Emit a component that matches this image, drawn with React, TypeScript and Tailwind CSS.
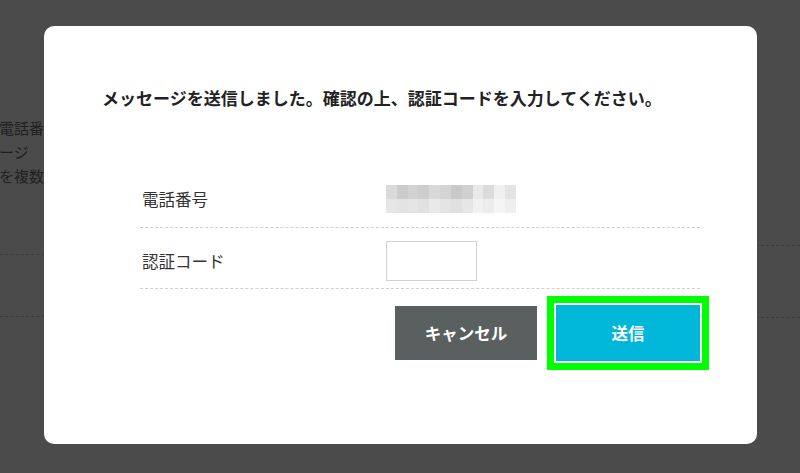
const mosaicTop = ["#dadada", "#cbcbcb", "#d2d2d2", "#cdcdcd", "#d9d9d9", "#d4d4d4", "#c9c9c9", "#d0d0d0", "#e9e9e9", "#dcdcdc", "#f0f0f0", "#e4e4e4"];
const mosaicBottom = ["#e6e6e6", "#e3e3e3", "#e5e5e5", "#e1e1e1", "#e9e9e9", "#e4e4e4", "#e0e0e0", "#e6e6e6", "#f1f1f1", "#ececec", "#f5f5f5", "#efefef"];

function Mosaic() {
  return (
    <div className="flex flex-col w-[130px] h-[28px]">
      {[mosaicTop, mosaicBottom].map((row, i) => (
        <div key={i} className="flex flex-1">
          {row.map((c, j) => (
            <div key={j} className="flex-1" style={{ backgroundColor: c }} />
          ))}
        </div>
      ))}
    </div>
  );
}

export default function App() {
  return (
    <div
      className="relative w-[800px] h-[473px] overflow-hidden bg-[#4b4b4b]"
      style={{ fontFamily: '"Noto Sans CJK JP", "Noto Sans", sans-serif' }}
    >
      {/* Page behind the dialog */}
      <div className="flex justify-between h-full">
        <div className="w-[60px] flex flex-col">
          <div className="mt-[116px] -ml-[1px] text-[15px] leading-[24px] text-[#1f1f1f] whitespace-nowrap">
            <p>電話番号</p>
            <p>ージ</p>
            <p>を複数</p>
          </div>
          <div className="mt-[66px] border-t border-dashed border-[#3c3c3c]" />
          <div className="mt-[61px] border-t border-dashed border-[#3c3c3c]" />
        </div>
        <div className="w-[60px] flex flex-col">
          <div className="mt-[245px] border-t border-dashed border-[#3c3c3c]" />
          <div className="mt-[71px] border-t border-dashed border-[#3c3c3c]" />
        </div>
      </div>

      {/* Dialog */}
      <div className="absolute left-[44px] top-[26px] w-[713px] h-[418px] rounded-[10px] bg-white">
        <h2 className="pt-[60px] pl-[58px] text-[17px] leading-[24px] font-bold text-[#222] whitespace-nowrap">
          メッセージを送信しました。確認の上、認証コードを入力してください。
        </h2>

        <div className="ml-[96px] mt-[62px] w-[560px] text-[16.5px] text-[#333]">
          <div className="flex items-center h-[56px] pt-[13px] pb-[14px] border-b border-dashed border-[#d0d0d0]">
            <span className="w-[246px] pl-[2px]">電話番号</span>
            <Mosaic />
          </div>
          <div className="flex items-center pt-[13px] pb-[7px] border-b border-dashed border-[#d0d0d0]">
            <span className="w-[246px] pl-[2px]">認証コード</span>
            <input
              type="text"
              className="w-[91px] h-[40px] border border-[#d0d0d0] bg-white outline-none"
            />
          </div>
        </div>

        <div className="flex justify-end items-center gap-[10px] pr-[48px] mt-[7px]">
          <button className="w-[142px] h-[54px] bg-[#59605f] text-white text-[16.5px] font-bold">
            キャンセル
          </button>
          <div className="border-[7px] border-[#00ff00] p-[2px]">
            <button className="w-[144px] h-[56px] bg-[#00b6d9] text-white text-[16.5px] font-bold">
              送信
            </button>
          </div>
        </div>
      </div>
    </div>
  );
}
